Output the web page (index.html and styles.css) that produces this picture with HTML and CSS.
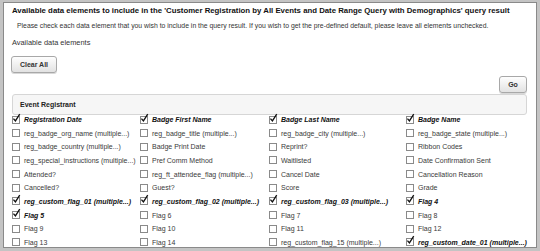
FILE: index.html
```html
<!DOCTYPE html>
<html>
<head>
<meta charset="utf-8">
<link rel="stylesheet" href="styles.css">
</head>
<body>
<div class="frame">
  <h1 class="title">Available data elements to include in the 'Customer Registration by All Events and Date Range Query with Demographics' query result</h1>
  <p class="desc">Please check each data element that you wish to include in the query result. If you wish to get the pre-defined default, please leave all elements unchecked.</p>
  <p class="avail">Available data elements</p>
  <div class="clear-row"><button class="btn btn-clear">Clear All</button></div>
  <div class="go-row"><button class="btn btn-go">Go</button></div>
  <div class="panel">Event Registrant</div>
  <div class="grid">
    <label class="item on"><span class="cb"><svg viewBox="0 0 10 11"><path d="M1.6 6.2 L3.8 8.8 L8.6 1.2"/></svg></span>Registration Date</label>
    <label class="item on"><span class="cb"><svg viewBox="0 0 10 11"><path d="M1.6 6.2 L3.8 8.8 L8.6 1.2"/></svg></span>Badge First Name</label>
    <label class="item on"><span class="cb"><svg viewBox="0 0 10 11"><path d="M1.6 6.2 L3.8 8.8 L8.6 1.2"/></svg></span>Badge Last Name</label>
    <label class="item on"><span class="cb"><svg viewBox="0 0 10 11"><path d="M1.6 6.2 L3.8 8.8 L8.6 1.2"/></svg></span>Badge Name</label>

    <label class="item"><span class="cb"></span>reg_badge_org_name (multiple...)</label>
    <label class="item"><span class="cb"></span>reg_badge_title (multiple...)</label>
    <label class="item"><span class="cb"></span>reg_badge_city (multiple...)</label>
    <label class="item"><span class="cb"></span>reg_badge_state (multiple...)</label>

    <label class="item"><span class="cb"></span>reg_badge_country (multiple...)</label>
    <label class="item"><span class="cb"></span>Badge Print Date</label>
    <label class="item"><span class="cb"></span>Reprint?</label>
    <label class="item"><span class="cb"></span>Ribbon Codes</label>

    <label class="item"><span class="cb"></span>reg_special_instructions (multiple...)</label>
    <label class="item"><span class="cb"></span>Pref Comm Method</label>
    <label class="item"><span class="cb"></span>Waitlisted</label>
    <label class="item"><span class="cb"></span>Date Confirmation Sent</label>

    <label class="item"><span class="cb"></span>Attended?</label>
    <label class="item"><span class="cb"></span>reg_ft_attendee_flag (multiple...)</label>
    <label class="item"><span class="cb"></span>Cancel Date</label>
    <label class="item"><span class="cb"></span>Cancellation Reason</label>

    <label class="item"><span class="cb"></span>Cancelled?</label>
    <label class="item"><span class="cb"></span>Guest?</label>
    <label class="item"><span class="cb"></span>Score</label>
    <label class="item"><span class="cb"></span>Grade</label>

    <label class="item on"><span class="cb"><svg viewBox="0 0 10 11"><path d="M1.6 6.2 L3.8 8.8 L8.6 1.2"/></svg></span>reg_custom_flag_01 (multiple...)</label>
    <label class="item on"><span class="cb"><svg viewBox="0 0 10 11"><path d="M1.6 6.2 L3.8 8.8 L8.6 1.2"/></svg></span>reg_custom_flag_02 (multiple...)</label>
    <label class="item on"><span class="cb"><svg viewBox="0 0 10 11"><path d="M1.6 6.2 L3.8 8.8 L8.6 1.2"/></svg></span>reg_custom_flag_03 (multiple...)</label>
    <label class="item on"><span class="cb"><svg viewBox="0 0 10 11"><path d="M1.6 6.2 L3.8 8.8 L8.6 1.2"/></svg></span>Flag 4</label>

    <label class="item on"><span class="cb"><svg viewBox="0 0 10 11"><path d="M1.6 6.2 L3.8 8.8 L8.6 1.2"/></svg></span>Flag 5</label>
    <label class="item"><span class="cb"></span>Flag 6</label>
    <label class="item"><span class="cb"></span>Flag 7</label>
    <label class="item"><span class="cb"></span>Flag 8</label>

    <label class="item"><span class="cb"></span>Flag 9</label>
    <label class="item"><span class="cb"></span>Flag 10</label>
    <label class="item"><span class="cb"></span>Flag 11</label>
    <label class="item"><span class="cb"></span>Flag 12</label>

    <label class="item"><span class="cb"></span>Flag 13</label>
    <label class="item"><span class="cb"></span>Flag 14</label>
    <label class="item"><span class="cb"></span>reg_custom_flag_15 (multiple...)</label>
    <label class="item on"><span class="cb"><svg viewBox="0 0 10 11"><path d="M1.6 6.2 L3.8 8.8 L8.6 1.2"/></svg></span>reg_custom_date_01 (multiple...)</label>
  </div>
</div>
</body>
</html>
```

FILE: styles.css
```css
html, body {
  margin: 0;
  padding: 0;
  background: #c4c4c4;
}
body {
  width: 540px;
  height: 251px;
  overflow: hidden;
  font-family: "Liberation Sans", Arial, sans-serif;
}
.frame {
  margin: 2px 3px 0 3px;
  width: 532px;
  height: 244px;
  border: 1px solid #8a8a8a;
  background: #ffffff;
  overflow: hidden;
  display: flex;
  flex-direction: column;
}
.frame > * {
  flex: none;
}
.title {
  margin: 3px 0 0 8px;
  font-size: 7.8px;
  line-height: 9px;
  font-weight: bold;
  color: #111;
  white-space: nowrap;
}
.desc {
  margin: 7px 0 0 13px;
  font-size: 6.85px;
  line-height: 8px;
  color: #333;
  white-space: nowrap;
}
.avail {
  margin: 8px 0 0 8px;
  font-size: 7.4px;
  line-height: 9px;
  color: #333;
}
.clear-row {
  margin: 9px 0 0 7px;
  display: flex;
}
.go-row {
  margin: 3px 9px 0 0;
  display: flex;
  justify-content: flex-end;
}
.btn {
  height: 17px;
  padding: 0;
  border: 1px solid #a8a8a8;
  border-radius: 3px;
  background: linear-gradient(#fefefe, #e2e2e2);
  font-family: "Liberation Sans", Arial, sans-serif;
  font-size: 7px;
  font-weight: bold;
  color: #333;
  box-shadow: 0 1px 0 #d8d8d8;
}
.btn-clear { width: 46px; }
.btn-go { width: 28px; }
.panel {
  margin: 1px 9px 0 8px;
  height: 19px;
  border: 1px solid #d6d6d6;
  border-radius: 3px;
  background: #f6f6f6;
  padding-left: 7px;
  font-size: 7px;
  font-weight: bold;
  color: #222;
  display: flex;
  align-items: center;
}
.grid {
  margin: 0 0 0 8px;
  display: grid;
  grid-template-columns: 128px 129px 137px 1fr;
  grid-auto-rows: 13.67px;
}
.item {
  display: flex;
  align-items: center;
  gap: 4px;
  height: 9px;
  font-size: 7px;
  line-height: 9px;
  color: #3a3a3a;
  white-space: nowrap;
}
.item.on {
  font-weight: bold;
  font-style: italic;
  color: #111;
}
.cb {
  position: relative;
  flex: none;
  width: 6px;
  height: 6px;
  border: 1px solid #8a8a8a;
  background: #fff;
}
.cb svg {
  position: absolute;
  left: -1px;
  top: -4px;
  width: 9px;
  height: 10px;
  fill: none;
  stroke: #111;
  stroke-width: 1.5;
}
```
